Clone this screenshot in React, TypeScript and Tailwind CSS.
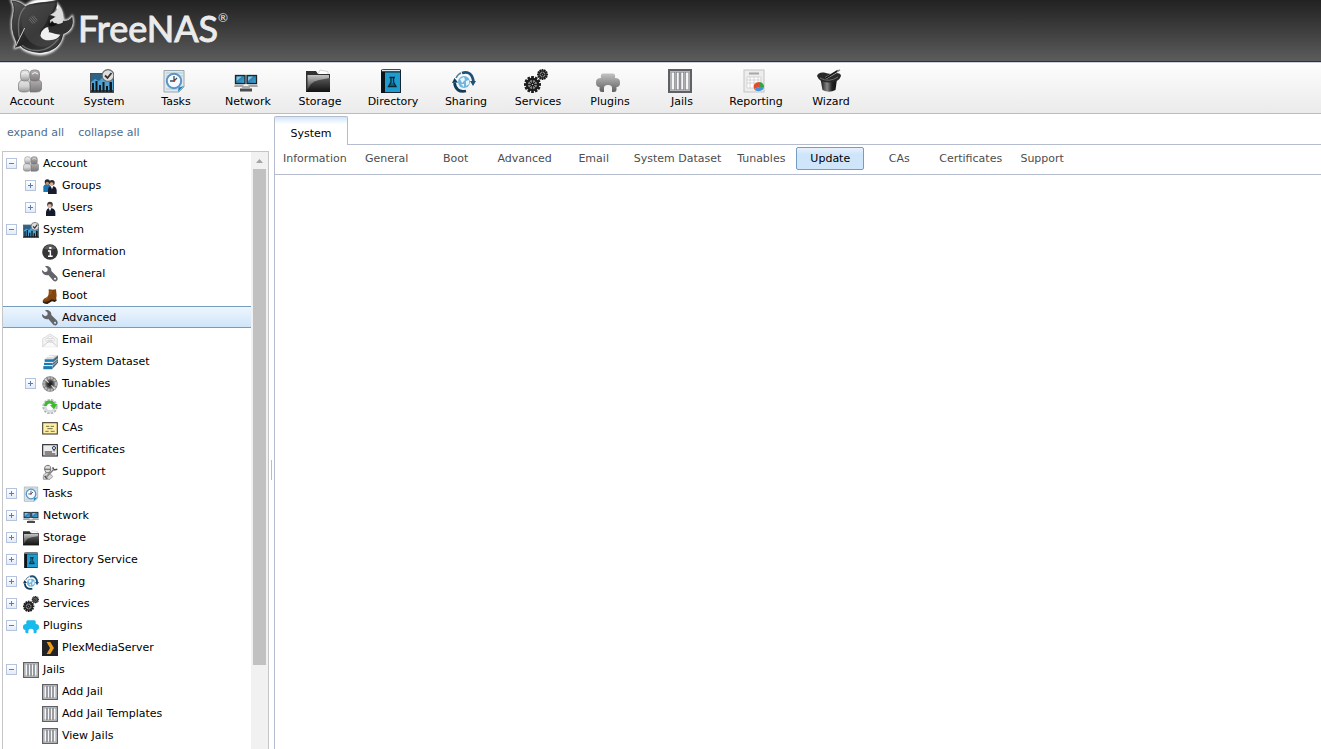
import { useState } from "react"
import type { ReactNode } from "react"
import clsx from "clsx"

const GEAR_TEETH = [0, 30, 60, 90, 120, 150, 180, 210, 240, 270, 300, 330]

function Gear({ cx, cy, r }: { cx: number; cy: number; r: number }) {
  return (
    <g transform={`translate(${cx} ${cy}) scale(${r / 10})`}>
      {GEAR_TEETH.map((angle) => (
        <rect key={angle} x="-1.6" y="-10" width="3.2" height="4" fill="#1c1c1c" transform={`rotate(${angle})`} />
      ))}
      <circle r="6.6" fill="#858585" stroke="#1c1c1c" strokeWidth="2.4" />
      <path d="M0-6V6M-6 0H6M-4-4L4 4M4-4L-4 4" stroke="#222" strokeWidth="1.1" />
      <circle r="2.4" fill="#111" />
      <circle r="0.9" fill="#ccc" />
    </g>
  )
}

// every drawing lives on a 24x24 grid, so the toolbar and the tree can share it
const icons: Record<string, ReactNode> = {
  account: (
    <>
      <path d="M12 11C12 9 23 9 23.5 14V20Q23 23 18 23H12Z" fill="url(#grayDark)" stroke="#777" strokeWidth=".7" />
      <rect x="12" y="1" width="9.5" height="11" rx="3.5" fill="url(#grayDark)" stroke="#777" strokeWidth=".7" />
      <path d="M.5 16Q.5 11 6 11Q12 11 12 16V20Q12 23 6 23Q.5 23 .5 20Z" fill="url(#grayLight)" stroke="#777" strokeWidth=".7" />
      <rect x="2.5" y="1" width="9" height="11" rx="3.5" fill="url(#grayLight)" stroke="#888" strokeWidth=".7" />
      <path d="M4 5Q7 2 10 5M14 5Q17 2 20 5" stroke="#f5f5f5" fill="none" />
    </>
  ),
  system: (
    <>
      <rect x=".5" y="4.5" width="23" height="19" fill="#4ba3d3" stroke="#4a4f53" />
      <path d="M1 13L5 10L9 12L14 7L18 9L23 8V5H1Z" fill="#2d6288" />
      <path d="M2 23V14H4V23ZM5.500 23V12H7.500V23ZM9 23V16H11V23ZM12.500 23V13H14.500V23ZM16 23V17H18V23ZM19.500 23V13H22V23Z" fill="#11171c" />
      <path d="M1 22H23" stroke="#1b2329" strokeWidth="1.500" />
      <circle cx="18" cy="6.5" r="5.9" fill="#dedede" stroke="#6a6a6a" strokeWidth="1.2" />
      <path d="M15 6.5L17.500 9L21.500 4" fill="none" stroke="#333" strokeWidth="1.8" />
    </>
  ),
  tasks: (
    <>
      <path d="M2 1.500H22V18L17 23H2Z" fill="#dfe9ec" stroke="#9aa7ab" />
      <path d="M4 4H21M4 7H21M4 20H16" stroke="#b7cbd2" />
      <circle cx="12" cy="12" r="7.2" fill="#f3faff" stroke="#5b92c8" strokeWidth="2" />
      <path d="M12 7V12H8M12 12L15 9" fill="none" stroke="#414d58" strokeWidth="1.3" />
      <circle cx="12" cy="12" r="1" fill="#c33" />
      <path d="M22 17L16 23L16.500 18.500Z" fill="#1587c5" />
    </>
  ),
  network: (
    <>
      <rect x="1.5" y="6.5" width="9.5" height="8" fill="url(#skyBlue)" stroke="#1d252c" strokeWidth="1.3" />
      <rect x="13" y="6.5" width="9.5" height="8" fill="url(#skyBlue)" stroke="#1d252c" strokeWidth="1.3" />
      <path d="M2.500 7.500H8L2.500 12ZM14 7.500H19L14 12Z" fill="#b5e3fb" opacity=".7" />
      <path d="M1 15.500H9L10.500 18H0ZM15 15.500H23L24 18H13.500Z" fill="#a5a5a5" />
      <path d="M8 18H16" stroke="#aaa" strokeWidth="2" />
      <path d="M6 19.500H18V22.500H6Z" fill="#4b4b4b" />
    </>
  ),
  storage: (
    <>
      <path d="M12 5L14 1L22 2.500V7H12Z" fill="#fff" stroke="#bbb" strokeWidth=".6" />
      <path d="M0 2H10L12 5H24V23H0Z" fill="#303030" />
      <path d="M1.500 6H23V22H1.500Z" fill="url(#folder)" />
      <path d="M0 23L5 15Q8 12 13 11L24 9V23Z" fill="url(#folderFront)" />
    </>
  ),
  directory: (
    <>
      <path d="M2 1Q3 0 5 0H21L22 1V24H2Z" fill="#17272f" />
      <path d="M3 1.500H21" stroke="#d8e5e9" strokeWidth="1.4" />
      <rect x="6" y="3.5" width="15" height="19.5" fill="#1e9ccf" />
      <path d="M2 3H6V24H2Z" fill="#0b141a" />
      <path d="M10.500 8.500H16M12 8.500V13L9.500 17.500H17L14.500 13V8.500" fill="none" stroke="#0c2534" strokeWidth="1.3" />
      <path d="M12 14H14.500L16.500 17.500H10Z" fill="#0c2534" opacity=".5" />
    </>
  ),
  sharing: (
    <>
      <circle cx="12" cy="13" r="6" fill="#71b5dc" />
      <path d="M8 10L12 8L13 11L10 14ZM14 12L17 11L17 15L14 17ZM9 15L12 15L12 18Z" fill="#e7f5fc" />
      <path d="M10 4Q20 1 21.500 13" fill="none" stroke="#1c5277" strokeWidth="2.8" />
      <path d="M18 12H24L21 17Z" fill="#1c5277" />
      <path d="M14 22Q4 24 2.500 14" fill="none" stroke="#123c5a" strokeWidth="2.8" />
      <path d="M0 14L2.500 9L6 13.500Z" fill="#123c5a" />
      <path d="M4 9Q6 5 9 4" fill="none" stroke="#517d99" strokeWidth="1.5" />
    </>
  ),
  services: (
    <>
      <Gear cx={8.5} cy={15.5} r={8.5} />
      <Gear cx={18.5} cy={5.5} r={5.5} />
    </>
  ),
  plugins: (
    <path d="M5 9Q4 4 8 4.500H16Q20 4 19 9Q24 9 24 13V14Q24 18 20.500 18V21Q20.500 23 18 23H16V19Q16 16 12 16Q8 16 8 19V23H6Q3.500 23 3.500 21V18Q0 18 0 14V13Q0 9 5 9Z" fill="url(#grayPlug)" />
  ),
  pluginsBlue: (
    <path d="M5 9Q4 3 8 3.500H16Q20 3 19 9Q24 9 24 13V14Q24 18 20.500 18V21Q20.500 23 18 23H16V19Q16 16 12 16Q8 16 8 19V23H6Q3.500 23 3.500 21V18Q0 18 0 14V13Q0 9 5 9Z" fill="#18b9ec" />
  ),
  jails: (
    <>
      <rect x="1" y="1" width="22" height="22" fill="#f6f6f6" stroke="#5f6165" strokeWidth="2" />
      <path d="M2 3H22M2 21H22M3 3V21M21 3V21" stroke="#a0a1a5" strokeWidth="1.6" />
      <path d="M7.500 3V21M12 3V21M16.500 3V21" stroke="#777a80" strokeWidth="2.4" />
      <path d="M7.500 3V21M12 3V21M16.500 3V21" stroke="#b7b9bd" strokeWidth=".8" />
    </>
  ),
  reporting: (
    <>
      <rect x="2" y="1" width="20" height="22" fill="#ededed" stroke="#c3c3c3" />
      <path d="M7 4.500H17" stroke="#a7a7a7" strokeWidth="2" />
      <path d="M5 8H19V19H5ZM5 11H19M5 14H19M8 8V19M12 8V19M16 8V19" fill="#fff" stroke="#ccc" strokeWidth=".8" />
      <path d="M17 18V13A5 4.500 0 0 1 22 18Z" fill="#36a346" />
      <path d="M17 18L12 20A5.500 5 0 0 0 22 18Z" fill="#4593df" />
      <path d="M17 18L12 20Q10 14 17 13Z" fill="#e44b2e" />
    </>
  ),
  wizard: (
    <>
      <path d="M3.500 10L5.500 21Q12 24.500 18.500 21L20 10Z" fill="url(#hat)" />
      <path d="M0 7Q1 3 7 3.500Q14 6 19 4Q24 4 24 7Q22 13.500 12 13.500Q2 13 0 7Z" fill="#292929" />
      <path d="M3 9Q12 14 21 8" stroke="#6d6d6d" fill="none" />
      <path d="M9 9L20 2.500" stroke="#c9c9c9" strokeWidth="2.4" />
      <path d="M9 9L21 1.500" stroke="#161616" strokeWidth="1.5" />
      <path d="M20 2.500L23 .8" stroke="#888" strokeWidth="1.5" />
    </>
  ),
  groups: (
    <>
      <path d="M2 21V13Q3 9 8 9Q12 9 13 14V21Z" fill="#1878b5" />
      <circle cx="8" cy="6" r="4" fill="#29292a" />
      <circle cx="8" cy="8" r="2.5" fill="#bd9273" />
      <path d="M9 24V17Q10 12 15 12Q21 12 22 18V24Z" fill="#171c2e" />
      <circle cx="15" cy="7" r="4" fill="#322b28" />
      <circle cx="14.5" cy="9" r="2.8" fill="#d5ae92" />
      <path d="M13 12H17L15 17Z" fill="#fff" />
    </>
  ),
  users: (
    <>
      <path d="M6 24V18Q7 12 12 12Q19 12 20 18V24Z" fill="#14192d" />
      <circle cx="12" cy="7" r="4.2" fill="#423a38" />
      <circle cx="11.5" cy="9" r="3" fill="#d5b5a1" />
      <path d="M10 12H14L12 17Z" fill="#fff" />
    </>
  ),
  information: (
    <>
      <circle cx="12" cy="12" r="11.7" fill="#363638" />
      <path d="M3 7A10 10 0 0 1 21 7Q12 10 3 7Z" fill="#5c5c5c" />
      <path d="M12.500 4.500V7.500" stroke="#fff" strokeWidth="3.4" />
      <path d="M9 10.500H12.500V18.500M9 18.500H16" stroke="#fff" strokeWidth="2.2" fill="none" />
    </>
  ),
  wrench: (
    <path
      d="M0 6L4.500 9.500L8 8L8.500 4L4.500 .5C9-1 14.500 2 14 7.500L22 15.500C26 20 21.500 25.500 17 22L9.500 13.500C5 15 -1 11 0 6ZM19.500 17.500A1.500 1.500 0 1 0 19.600 20.500A1.500 1.500 0 1 0 19.500 17.500Z"
      fill="#62656a"
      fillRule="evenodd"
    />
  ),
  boot: (
    <>
      <path d="M10 2Q17 3 21 2L22 12L20 19L15 18L9 23Q2 24 1 19Q2 16 7 14Q11 12 10 2Z" fill="#84450f" />
      <path d="M1 20Q7 23 14 17L20 18L21 14L22 19L19 21L15 20L8 24Q1 24 1 20Z" fill="#33200f" />
      <path d="M11 5L15 6M11 8L14 9M5 17L9 14" stroke="#a86629" strokeWidth="1.3" />
    </>
  ),
  email: (
    <>
      <path d="M1 10L12 3L23 10V22H1Z" fill="#f4f4f4" stroke="#cfcfd2" />
      <path d="M5 11L12 6L19 11L16 15H8Z" fill="#fff" stroke="#ccc" />
      <path d="M1 22L9 15H15L23 22" fill="#fafafa" stroke="#bcbcc0" />
      <path d="M8 10H16M8 12.500H16" stroke="#bbb" />
    </>
  ),
  dataset: (
    <>
      <path d="M4 8L11 2H24L18 8Z" fill="#d5dadd" />
      <path d="M17 8L24 2V13L15 23Z" fill="#516575" />
      <path d="M4 8H18V12H4ZM3 13H16V17H3ZM2 18H15V23H2Z" fill="#1b79b4" />
      <path d="M3 12.500H17L24 7M2 17.500H16L23 11" stroke="#f1f7fa" fill="none" />
      <path d="M9 4L17 4" stroke="#fff" strokeWidth="1.5" />
    </>
  ),
  tunables: (
    <>
      <circle cx="12" cy="12" r="11.5" fill="#767676" />
      <circle cx="12" cy="12" r="9" fill="none" stroke="#b9b9b9" strokeWidth="3" strokeDasharray="3.5 1.2" />
      <circle cx="12" cy="12" r="5.5" fill="#3d3d3d" />
      <path d="M4 4L20 20" stroke="#e0e0e0" strokeWidth="1.6" />
      <circle cx="12" cy="12" r="3" fill="#222" />
    </>
  ),
  update: (
    <>
      <circle cx="12" cy="13" r="9.5" fill="none" stroke="#b5b8bb" strokeWidth="4" strokeDasharray="3.5 1.5" />
      <circle cx="12" cy="13" r="7" fill="none" stroke="#dadde0" strokeWidth="4" />
      <path d="M3 12Q4 3 13 4Q18 4 19.500 9L23 9L18 17L12 11L15 10Q10 6 7 12Z" fill="#3dbb2c" />
    </>
  ),
  cas: (
    <>
      <rect x="1" y="4" width="22" height="17" fill="#fff0a5" stroke="#4b4637" strokeWidth="1.7" />
      <path d="M6 9.500H11M13 9.500H18M8 13H16M5 17H10M13 17H19" stroke="#77704c" strokeWidth="1.5" />
    </>
  ),
  certificates: (
    <>
      <rect x="1" y="4" width="22" height="17" fill="#ececec" stroke="#272a30" strokeWidth="1.7" />
      <path d="M4 15H15M4 18H20" stroke="#222" strokeWidth="1.5" />
      <circle cx="18" cy="9" r="2.3" fill="#fff" stroke="#26334a" strokeWidth="1.5" />
      <path d="M17 11V14M19 11V14" stroke="#26334a" />
    </>
  ),
  support: (
    <>
      <path d="M4 9Q3 2 9 2Q14 2 13 9L11 13H6Z" fill="#ddd" stroke="#777" strokeWidth="1.5" />
      <path d="M4 8H13" stroke="#777" strokeWidth="2" />
      <path d="M2 23Q1 14 7 13L12 14L16 19L12 23Z" fill="#d6d6d6" stroke="#777" />
      <path d="M5 21L18 8M16 5L18 9L23 8M4 18L8 22" fill="none" stroke="#4c4c4c" strokeWidth="2.2" />
      <path d="M6 20L18 8.500" stroke="#eee" />
    </>
  ),
  plex: (
    <>
      <rect width="24" height="24" fill="#222326" />
      <path d="M7 3H12.500L18 12L12.500 21H7L12 12Z" fill="#eb9b1b" />
    </>
  ),
}

function Icon({ name, className }: { name: string; className: string }) {
  return (
    <svg viewBox="0 0 24 24" className={clsx("shrink-0", className)} aria-hidden="true">
      {icons[name]}
    </svg>
  )
}

function Gradients() {
  return (
    <svg className="absolute size-0" aria-hidden="true">
      <defs>
        <linearGradient id="grayLight" x2="0" y2="1">
          <stop stopColor="#e3e3e3" />
          <stop offset=".5" stopColor="#d4d4d4" />
          <stop offset="1" stopColor="#969696" />
        </linearGradient>
        <linearGradient id="grayDark" x2="0" y2="1">
          <stop stopColor="#b9b4b2" />
          <stop offset="1" stopColor="#7a7a7a" />
        </linearGradient>
        <linearGradient id="grayPlug" x2="0" y2="1">
          <stop stopColor="#c3c3c3" />
          <stop offset="1" stopColor="#606060" />
        </linearGradient>
        <linearGradient id="skyBlue" x2="1" y2="1">
          <stop stopColor="#1c5b86" />
          <stop offset="1" stopColor="#42b0e5" />
        </linearGradient>
        <linearGradient id="folder" x2="0" y2="1">
          <stop stopColor="#c4c4c4" />
          <stop offset="1" stopColor="#333" />
        </linearGradient>
        <linearGradient id="folderFront" x2="0" y2="1">
          <stop stopColor="#585858" />
          <stop offset="1" stopColor="#111" />
        </linearGradient>
        <linearGradient id="hat">
          <stop stopColor="#111" />
          <stop offset=".4" stopColor="#888" />
          <stop offset=".7" stopColor="#222" />
          <stop offset="1" stopColor="#111" />
        </linearGradient>
      </defs>
    </svg>
  )
}

function Logo() {
  return (
    <svg viewBox="0 0 234 180" className="h-[60px] w-[78px] shrink-0" aria-hidden="true">
      <defs>
        <filter id="glow" x="-20%" y="-20%" width="140%" height="140%">
          <feGaussianBlur stdDeviation="3.5" />
        </filter>
        <linearGradient id="shark" x2="1" y2="1">
          <stop stopColor="#555" />
          <stop offset=".5" stopColor="#242424" />
          <stop offset="1" stopColor="#4a4a4a" />
        </linearGradient>
        <radialGradient id="orb">
          <stop stopColor="#383838" />
          <stop offset=".8" stopColor="#555" />
          <stop offset="1" stopColor="#999" />
        </radialGradient>
      </defs>
      <g fill="#fff" stroke="#fff" strokeWidth="8" filter="url(#glow)">
        <path d="M36 3Q60 5 76 20Q106-10 158 2Q184 18 190 64Q207 65 216 52Q224 88 189 102Q178 158 120 162Q75 157 62 137L46 142L50 127Q30 86 40 46Q46 20 36 3Z" />
      </g>
      <circle cx="123" cy="76" r="69" fill="url(#orb)" />
      <path d="M36 3Q60 5 76 20L88 14Q120 8 170 3Q174 27 152 42L145 47L162 51L148 60L151 71L169 72Q181 80 190 64Q207 65 216 52Q224 88 189 102Q181 154 120 158Q75 154 62 137L46 142L50 127Q30 86 40 46Q46 20 36 3Z" fill="url(#shark)" stroke="#161616" strokeWidth="2" />
      <path d="M76 22Q52 60 78 110Q96 140 130 140Q160 138 176 112Q150 126 124 112Q112 96 128 84Q140 70 146 48Q160 36 166 8Q110 14 76 22Z" fill="#4a4a4a" opacity=".6" />
      <path d="M75 22Q48 48 58 112M66 136Q86 154 119 151Q150 149 176 116" fill="none" stroke="#888" strokeWidth="4" opacity=".7" />
      <path d="M176 14Q195 36 188 68L175 72Q160 66 152 70L150 61L167 50L151 44Q174 34 176 14Z" fill="#dcdcdc" />
      <path d="M143 69L151 71L156 62L164 72L170 69Q164 83 148 78Z" fill="#111" />
      <path d="M124 96Q135 80 145 82Q142 101 181 104Q173 119 148 121Q126 121 121 107Z" fill="#f0f0f0" />
      <path d="M146 97Q165 100 190 99Q207 92 213 68Q195 83 176 80Q158 77 150 83Z" fill="#303030" />
      <path d="M47 139L74 84" stroke="#c9c9c9" strokeWidth="3" />
      <path d="M90 52L105 70M95 49L109 66M100 47L112 61M87 57L99 71" stroke="#858585" strokeWidth="2" />
    </svg>
  )
}

const toolbar = [
  { label: "Account", icon: "account", width: "w-[60px]" },
  { label: "System", icon: "system", width: "w-[60px]" },
  { label: "Tasks", icon: "tasks", width: "w-[60px]" },
  { label: "Network", icon: "network", width: "w-[60px]" },
  { label: "Storage", icon: "storage", width: "w-[60px]" },
  { label: "Directory", icon: "directory", width: "w-[62px]" },
  { label: "Sharing", icon: "sharing", width: "w-[60px]" },
  { label: "Services", icon: "services", width: "w-[60px]" },
  { label: "Plugins", icon: "plugins", width: "w-[60px]" },
  { label: "Jails", icon: "jails", width: "w-[60px]" },
  { label: "Reporting", icon: "reporting", width: "w-[64px]" },
  { label: "Wizard", icon: "wizard", width: "w-[62px]" },
]

type Node = { label: string; icon: string; level?: 2; state?: "open" | "closed" }

const tree: Node[] = [
  { label: "Account", icon: "account", state: "open" },
  { label: "Groups", icon: "groups", level: 2, state: "closed" },
  { label: "Users", icon: "users", level: 2, state: "closed" },
  { label: "System", icon: "system", state: "open" },
  { label: "Information", icon: "information", level: 2 },
  { label: "General", icon: "wrench", level: 2 },
  { label: "Boot", icon: "boot", level: 2 },
  { label: "Advanced", icon: "wrench", level: 2 },
  { label: "Email", icon: "email", level: 2 },
  { label: "System Dataset", icon: "dataset", level: 2 },
  { label: "Tunables", icon: "tunables", level: 2, state: "closed" },
  { label: "Update", icon: "update", level: 2 },
  { label: "CAs", icon: "cas", level: 2 },
  { label: "Certificates", icon: "certificates", level: 2 },
  { label: "Support", icon: "support", level: 2 },
  { label: "Tasks", icon: "tasks", state: "closed" },
  { label: "Network", icon: "network", state: "closed" },
  { label: "Storage", icon: "storage", state: "closed" },
  { label: "Directory Service", icon: "directory", state: "closed" },
  { label: "Sharing", icon: "sharing", state: "closed" },
  { label: "Services", icon: "services", state: "closed" },
  { label: "Plugins", icon: "pluginsBlue", state: "open" },
  { label: "PlexMediaServer", icon: "plex", level: 2 },
  { label: "Jails", icon: "jails", state: "open" },
  { label: "Add Jail", icon: "jails", level: 2 },
  { label: "Add Jail Templates", icon: "jails", level: 2 },
  { label: "View Jails", icon: "jails", level: 2 },
]

const tabs = [
  "Information",
  "General",
  "Boot",
  "Advanced",
  "Email",
  "System Dataset",
  "Tunables",
  "Update",
  "CAs",
  "Certificates",
  "Support",
]

function Expander({ node }: { node: Node }) {
  if (!node.state) return <span className="w-[11px] shrink-0" />
  return (
    <button
      aria-label={node.state === "open" ? `Collapse ${node.label}` : `Expand ${node.label}`}
      className="size-[11px] shrink-0 border border-[#b5c3df] bg-linear-to-b from-white to-[#e4ebf6]"
    >
      <svg viewBox="0 0 9 9" className="block size-[9px]" shapeRendering="crispEdges">
        <path d="M2 4H7V5H2Z" fill="#5f7cae" />
        {node.state === "closed" && <path d="M4 2H5V7H4Z" fill="#5f7cae" />}
      </svg>
    </button>
  )
}

function TreeRow({ node, selected, onSelect }: { node: Node; selected: boolean; onSelect: () => void }) {
  return (
    <li
      className={clsx(
        "flex h-[22px] items-center border-y",
        node.level === 2 ? "pl-[22px]" : "pl-[3px]",
        selected ? "border-[#769dc0] bg-linear-to-b from-[#eef5fd] to-[#cfe5fa]" : "border-transparent"
      )}
    >
      <Expander node={node} />
      <button onClick={onSelect} className="ml-1.5 flex items-center gap-1 pt-0.5 whitespace-nowrap">
        <Icon name={node.icon} className="size-4" />
        <span className="leading-4">{node.label}</span>
      </button>
    </li>
  )
}

function Sidebar() {
  const [selected, setSelected] = useState("Advanced")

  return (
    <aside className="flex w-[269px] shrink-0 flex-col pl-0.5">
      <div className="flex h-[37px] shrink-0 items-center gap-3.5 pl-[5px] text-[#4d6d91]">
        <a href="#expand">expand all</a>
        <a href="#collapse">collapse all</a>
      </div>
      <div className="flex min-h-0 flex-1 border border-b-0 border-[#c5c5c5]">
        <ul className="min-w-0 flex-1 overflow-hidden">
          {tree.map((node, i) => (
            <TreeRow
              key={i}
              node={node}
              selected={node.label === selected}
              onSelect={() => setSelected(node.label)}
            />
          ))}
        </ul>
        <div className="flex w-[17px] shrink-0 flex-col bg-[#f1f1f1] px-0.5">
          <svg viewBox="0 0 13 17" className="h-[17px] w-[13px] shrink-0" aria-hidden="true">
            <path d="M3 11L6.500 7L10 11Z" fill="#a3a3a3" />
          </svg>
          <div className="grow-[496] bg-[#c1c1c1]" />
          <div className="grow-[84]" />
        </div>
      </div>
    </aside>
  )
}

export default function App() {
  const [tab, setTab] = useState("Update")

  return (
    <div className="flex h-screen flex-col overflow-hidden bg-white font-['DejaVu_Sans',Verdana,sans-serif] text-[11px] leading-4 text-black">
      <Gradients />
      <header className="flex h-[62px] shrink-0 items-start border-b border-[#303030] bg-linear-to-b from-[#222] to-[#5c5c5c]">
        <Logo />
        <h1 className="flex items-start font-['Lato',sans-serif] text-[36px] leading-[56px] text-[#ebebeb]">
          <span className="[-webkit-text-stroke:1px_#ebebeb]">FreeNAS</span>
          <span className="pt-2 text-xs leading-5">®</span>
        </h1>
      </header>

      <nav className="flex h-[52px] shrink-0 items-start gap-3 border-t border-b border-t-[#ccd0dc] border-b-[#b5bccd] bg-linear-to-b from-[#fdfdfd] to-[#ebebeb] pt-1.5 pl-0.5">
        {toolbar.map((item) => (
          <button key={item.label} className={clsx("flex shrink-0 flex-col items-center gap-px", item.width)}>
            <Icon name={item.icon} className="mr-1 size-6" />
            <span>{item.label}</span>
          </button>
        ))}
      </nav>

      <div className="flex min-h-0 flex-1">
        <Sidebar />
        <div className="flex w-[5px] shrink-0 items-center justify-center">
          <div className="mt-[76px] h-5 w-px bg-[#b5bccd]" />
        </div>
        <main className="flex min-w-0 flex-1 flex-col pt-0.5">
          <div className="flex shrink-0">
            <button className="h-[29px] w-[74px] rounded-t-xs border border-b-0 border-[#b5bccd] bg-linear-to-b from-[#cfe5fa] to-white to-25% pt-1.5">
              System
            </button>
            <div className="flex-1 border-b border-[#b5bccd]" />
          </div>
          <div className="flex flex-1 flex-col border-l border-[#b5bccd]">
            <div className="flex h-[30px] shrink-0 items-start gap-px border-b border-[#b5bccd] pt-0.5 pl-[3px]">
              {tabs.map((name) => (
                <button
                  key={name}
                  onClick={() => setTab(name)}
                  className={clsx(
                    "h-[23px] min-w-[68px] shrink-0 rounded-xs border px-1 whitespace-nowrap",
                    name === tab
                      ? "border-[#769dc0] bg-linear-to-b from-[#e8f2fd] to-[#cfe5fa] to-30% text-black"
                      : "border-transparent text-[#4d4d4d]"
                  )}
                >
                  {name}
                </button>
              ))}
            </div>
          </div>
        </main>
      </div>
    </div>
  )
}
